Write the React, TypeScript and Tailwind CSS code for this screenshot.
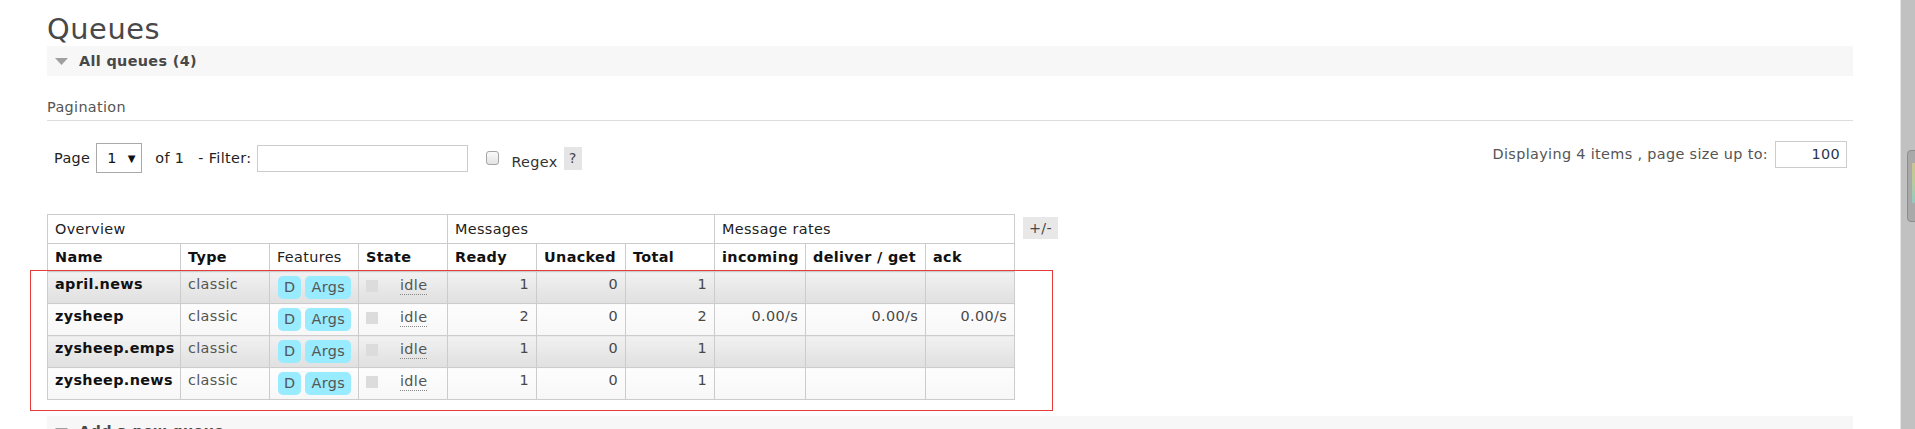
import React from 'react';

type Queue = {
  name: string;
  ready: number;
  unacked: number;
  total: number;
  rates?: string[];
};

const queues: Queue[] = [
  { name: 'april.news', ready: 1, unacked: 0, total: 1 },
  { name: 'zysheep', ready: 2, unacked: 0, total: 2, rates: ['0.00/s', '0.00/s', '0.00/s'] },
  { name: 'zysheep.emps', ready: 1, unacked: 0, total: 1 },
  { name: 'zysheep.news', ready: 1, unacked: 0, total: 1 },
];

function Triangle() {
  return (
    <svg width="13" height="7" viewBox="0 0 13 7" className="shrink-0">
      <path d="M0 0H13L6.5 7Z" fill="#a0a0a0" />
    </svg>
  );
}

function SectionBar({ title }: { title: string }) {
  return (
    <div className="flex h-[30px] items-center bg-[#f7f7f7] pl-[8px]">
      <Triangle />
      <span className="ml-[11px] font-bold text-[#484848]">{title}</span>
    </div>
  );
}

const cell = 'border border-[#cccccc] px-[7px]';

function QueueRow({ q, alt }: { q: Queue; alt: boolean }) {
  const bg = alt
    ? 'bg-linear-to-b from-[#f1f1f1] to-[#e0e0e0]'
    : 'bg-linear-to-b from-[#fdfdfd] to-[#f7f7f7]';
  const td = `${cell} ${bg} align-top pt-[4px]`;
  return (
    <tr className="h-[32px]">
      <td className={`${td} font-bold text-[#111]`}>{q.name}</td>
      <td className={`${td} text-[#555]`}>classic</td>
      <td className={`${td} pt-[3px]`}>
        <span className="ml-[1px] inline-block h-[23px] rounded-[5px] bg-[#99ebff] px-[6px] leading-[23px] text-[#555]">D</span>
        <span className="ml-[4px] inline-block h-[23px] rounded-[5px] bg-[#99ebff] px-[6px] leading-[23px] text-[#555]">Args</span>
      </td>
      <td className={td}>
        <div className="flex items-start">
          <span className="mt-[4px] inline-block h-[12px] w-[12px] shrink-0 bg-[#dcdcdc]" />
          <span className="ml-[22px] border-b border-dotted border-[#888] leading-[18px] text-[#555]">idle</span>
        </div>
      </td>
      <td className={`${td} text-right`}>{q.ready}</td>
      <td className={`${td} text-right`}>{q.unacked}</td>
      <td className={`${td} text-right`}>{q.total}</td>
      <td className={`${td} text-right`}>{q.rates?.[0] ?? ''}</td>
      <td className={`${td} text-right`}>{q.rates?.[1] ?? ''}</td>
      <td className={`${td} text-right`}>{q.rates?.[2] ?? ''}</td>
    </tr>
  );
}

export default function App() {
  return (
    <div className="relative flex h-[429px] w-[1915px] overflow-hidden bg-white font-['DejaVu_Sans',sans-serif] text-[14.4px] leading-[17px] tracking-[0.35px] text-[#484848]">
      <div className="w-[1900px] shrink-0 px-[47px]">
        <h1 className="h-[46px] pt-[13px] text-[28.8px] leading-[33px] font-normal tracking-[0.6px] text-[#484848]">Queues</h1>

        <SectionBar title="All queues (4)" />

        <h3 className="mt-[23px] border-b border-[#dddddd] pb-[4px] text-[#555]">Pagination</h3>

        <div className="mt-[20px] flex items-start justify-between">
          <div className="mt-[2px] ml-[7px] flex h-[30px] items-center text-[#222]">
            <span>Page</span>
            <div className="ml-[6px] flex h-[30px] w-[46px] items-center border border-[#a9a9a9] bg-white pl-[10px] text-[#111]">
              <span>1</span>
              <span className="ml-[11px] text-[10px]">▼</span>
            </div>
            <span className="ml-[13px]">of 1</span>
            <span className="ml-[14px]">- Filter:</span>
            <div className="ml-[6px] h-[27px] w-[211px] border border-[#cccccc] bg-white" />
            <div className="ml-[18px] h-[14px] w-[13px] rounded-[3px] border border-[#a5a5a5] bg-linear-to-b from-[#fafafa] to-[#e3e3e3]" />
            <span className="relative top-[4px] ml-[12px] text-[#333]">Regex</span>
            <span className="ml-[6px] flex h-[23px] w-[18px] items-center justify-center bg-[#e5e5e5] text-[#484848]">?</span>
          </div>
          <div className="mr-[6px] flex h-[27px] items-center text-[#555]">
            <span>Displaying 4 items , page size up to:</span>
            <div className="ml-[7px] flex h-[27px] w-[72px] items-center justify-end border border-[#cccccc] bg-white pr-[6px] text-[#2a3550]">100</div>
          </div>
        </div>

        <div className="mt-[41px] flex items-start">
          <table className="w-[967px] table-fixed border-collapse">
            <colgroup>
              <col className="w-[133px]" />
              <col className="w-[89px]" />
              <col className="w-[89px]" />
              <col className="w-[89px]" />
              <col className="w-[89px]" />
              <col className="w-[89px]" />
              <col className="w-[89px]" />
              <col className="w-[91px]" />
              <col className="w-[120px]" />
              <col className="w-[89px]" />
            </colgroup>
            <thead>
              <tr className="h-[29px] text-left font-normal text-[#222]">
                <th colSpan={4} className={`${cell} font-normal`}>Overview</th>
                <th colSpan={3} className={`${cell} font-normal`}>Messages</th>
                <th colSpan={3} className={`${cell} font-normal`}>Message rates</th>
              </tr>
              <tr className="h-[28px] text-left text-[#111]">
                <th className={`${cell} font-bold`}>Name</th>
                <th className={`${cell} font-bold`}>Type</th>
                <th className={`${cell} font-normal text-[#222]`}>Features</th>
                <th className={`${cell} font-bold`}>State</th>
                <th className={`${cell} font-bold`}>Ready</th>
                <th className={`${cell} font-bold`}>Unacked</th>
                <th className={`${cell} font-bold`}>Total</th>
                <th className={`${cell} font-bold`}>incoming</th>
                <th className={`${cell} font-bold`}>deliver / get</th>
                <th className={`${cell} font-bold`}>ack</th>
              </tr>
            </thead>
            <tbody>
              {queues.map((q, i) => (
                <QueueRow key={q.name} q={q} alt={i % 2 === 0} />
              ))}
            </tbody>
          </table>
          <span className="mt-[3px] ml-[8px] flex h-[22px] w-[35px] items-center justify-center bg-[#e8e8e8] text-[#484848]">+/-</span>
        </div>

        <div className="mt-[16px]">
          <SectionBar title="Add a new queue" />
        </div>
      </div>

      <div className="relative w-[15px] shrink-0 border-l border-[#e6e6e6] bg-[#c1c1c1]">
        <div className="absolute top-[150px] left-[6px] h-[72px] w-[12px] rounded-[4px] border border-[#8d8d8d] bg-[#a9a9a9]">
          <div className="mt-[12px] ml-[4px] h-[40px] w-[5px] bg-linear-to-b from-[#d6c98a] via-[#b8d49a] to-[#8fd0c4] opacity-80" />
        </div>
      </div>

      <div className="pointer-events-none absolute top-[270px] left-[30px] h-[141px] w-[1023px] border border-[#e53b3b]" />
    </div>
  );
}
